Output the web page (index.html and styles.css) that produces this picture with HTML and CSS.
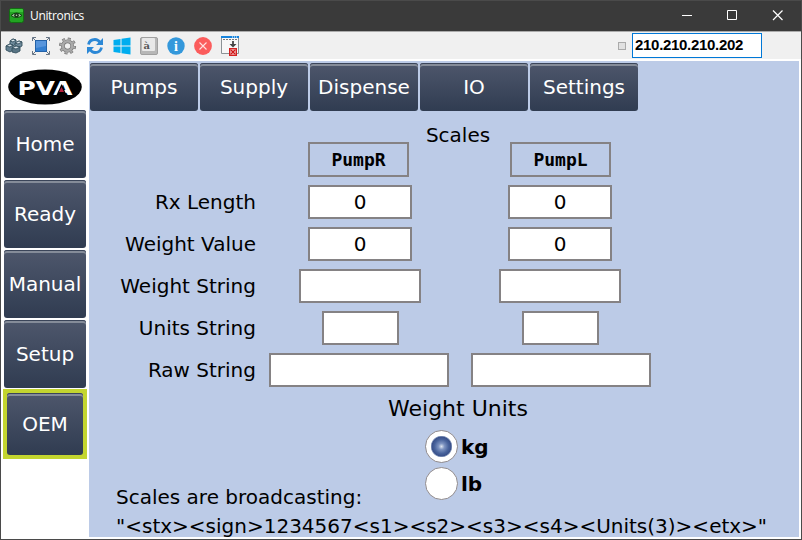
FILE: index.html
```html
<!DOCTYPE html>
<html lang="en">
<head>
<meta charset="utf-8">
<title>Unitronics</title>
<link rel="stylesheet" href="styles.css">
</head>
<body>
<div class="window">
  <header class="titlebar">
    <svg class="app-icon" width="15" height="15" viewBox="0 0 15 15"><rect x=".5" y=".5" width="14" height="14" rx="2" fill="#22a322" stroke="#126e12"/><path d="M1 4V2q0-1 1-1h11q1 0 1 1v2z" fill="#3cc43a"/><path d="M2 7.5Q7.500 2.500 13 7.500 7.500 11.500 2 7.500z" fill="#a9c9a5" stroke="#114411"/><circle cx="7.500" cy="7.300" r="2.300" fill="#173517"/><circle cx="7.500" cy="7.300" r=".8" fill="#bad9b5"/></svg>
    <span class="title">Unitronics</span>
    <svg class="controls" width="96" height="13" viewBox="0 0 96 13" fill="none" stroke="#fff"><path d="M0 6.500h10M45.500 1.500h9v9h-9z"/><path d="M91 1.500l9.500 9.500M100.500 1.500L91 11" stroke-width="1.200"/></svg>
  </header>
  <div class="toolbar">
    <div class="tools">
      <svg width="18" height="20" viewBox="0 0 18 20" stroke="#34505f" stroke-width=".9" stroke-linejoin="round"><path d="M5 5l3-2 3 1v4l-3 2-3-1z" fill="#6f8b9c"/><path d="M5 5l3-2 3 1-3 2z" fill="#dce6ec"/><path d="M10 7l4-2 3 1v4l-4 2-3-1z" fill="#6f8b9c"/><path d="M10 7l4-2 3 1-4 2z" fill="#dce6ec"/><path d="M1 10l4-2 3 1v5l-3 2-4-2z" fill="#637f90"/><path d="M1 10l4-2 3 1-3 2z" fill="#dce6ec"/><path d="M7 12l4-2 4 1v4l-4 2-4-1z" fill="#587484"/><path d="M7 12l4-2 4 1-4 2z" fill="#dce6ec"/></svg>
      <svg width="18" height="20" viewBox="0 0 18 20"><rect x="3.500" y="4.500" width="11" height="11" fill="#347fd0" stroke="#2362a8"/><path d="M4 5h10v5L4 12z" fill="#5795dc"/><path d="M.5 5V1.500H4M14 1.500h3.500V5M17.500 15v3.500H14M4 18.500H.5V15M1 2l2 2M17 2l-2 2M1 18l2-2M17 18l-2-2" fill="none" stroke="#44566a" stroke-width=".8"/></svg>
      <svg width="20" height="20" viewBox="0 0 20 20"><circle cx="9.500" cy="10" r="5.200" fill="none" stroke="#777" stroke-width="4.200"/><circle cx="9.500" cy="10" r="8" fill="none" stroke="#777" stroke-width="3" stroke-dasharray="3.200 3.083"/><circle cx="9.500" cy="10" r="5.200" fill="none" stroke="#aaa" stroke-width="2.800"/><circle cx="9.500" cy="10" r="7.500" fill="none" stroke="#aaa" stroke-width="2.400" stroke-dasharray="2 3.890" stroke-dashoffset="-.5"/></svg>
      <svg width="18" height="20" viewBox="0 0 18 20" fill="none" stroke="#2c88d6" stroke-width="2.800"><path d="M2.500 8.500Q3.500 3.500 9 3.500q3 0 5 3M15.500 11.500q-1 5-6.500 5-3 0-5-3"/><path d="M10 9h7V2zM8 11H1v7z" fill="#2c88d6" stroke="none"/></svg>
      <svg width="17" height="20" viewBox="0 0 17 20" fill="#00adef"><path d="M0 4l7-1v6.500H0zM8 2.800L17 1.500v8H8zM0 10.500h7V17l-7-1zM8 10.500h9v8l-9-1.300z"/></svg>
      <svg class="key-icon" width="18" height="20" viewBox="0 0 18 20"><rect x=".5" y="1.500" width="17" height="17" rx="1.500" fill="#b7b7b7" stroke="#a0a0a0"/><rect x="2" y="2" width="13" height="13" rx="1" fill="#e8e8e8"/><text x="3.500" y="13">à</text></svg>
      <svg class="info-icon" width="18" height="20" viewBox="0 0 18 20"><circle cx="9" cy="10" r="8.700" fill="#3498db"/><text x="9" y="15" text-anchor="middle">i</text></svg>
      <svg width="18" height="20" viewBox="0 0 18 20"><circle cx="9" cy="10" r="8.900" fill="#fb5c5c"/><path d="M5.500 6.500l7 7M12.500 6.500l-7 7" stroke="#ffe1e1" stroke-width="1.100"/></svg>
      <svg width="18" height="20" viewBox="0 0 18 20"><path d="M.5.5h17v17H.5z" fill="#f7f7f7" stroke="#8c9296"/><path d="M0 0h18v2H0z" fill="#1683dc"/><path d="M11 1h1m1 0h1m1 0h1" stroke="#fff"/><path d="M2 3.500h14" stroke="#777" stroke-dasharray="2 1"/><path d="M12 5v5" stroke="#444" stroke-width="1.800"/><path d="M8.500 8h7L12 11.500z" fill="#444"/><path d="M8.750 12.750h6.500v6.500h-6.500z" fill="#fff" stroke="#d32121" stroke-width="1.500"/><path d="M10 14l4 4M14 14l-4 4" stroke="#d01818" stroke-width="1.600"/></svg>
    </div>
    <span class="indicator"></span>
    <div class="address">210.210.210.202</div>
  </div>
  <div class="body">
    <nav class="sidebar">
      <svg class="logo" width="74" height="36" viewBox="0 0 74 36"><ellipse cx="37" cy="18" rx="36.800" ry="17.500"/><text x="9.500" y="25.500" textLength="55" lengthAdjust="spacingAndGlyphs">PVA</text><path d="M53.500 15l5 11h-10z"/><path d="M53.500 18l2.500 5h-5z" fill="#b51f3c"/></svg>
      <div class="btn side">Home</div>
      <div class="btn side">Ready</div>
      <div class="btn side">Manual</div>
      <div class="btn side">Setup</div>
      <div class="selected"><div class="btn">OEM</div></div>
    </nav>
    <main class="panel">
      <div class="tabs">
        <div class="btn">Pumps</div><div class="btn">Supply</div><div class="btn">Dispense</div><div class="btn">IO</div><div class="btn">Settings</div>
      </div>
      <div class="heading">Scales</div>
      <div class="row head"><span></span><div class="cell"><div class="field name">PumpR</div></div><div class="cell"><div class="field name">PumpL</div></div></div>
      <div class="row"><span>Rx Length</span><div class="cell"><div class="field num">0</div></div><div class="cell"><div class="field num">0</div></div></div>
      <div class="row"><span>Weight Value</span><div class="cell"><div class="field num">0</div></div><div class="cell"><div class="field num">0</div></div></div>
      <div class="row"><span>Weight String</span><div class="cell"><div class="field weight"></div></div><div class="cell"><div class="field weight"></div></div></div>
      <div class="row units"><span>Units String</span><div class="cell"><div class="field unit"></div></div><div class="cell"><div class="field unit"></div></div></div>
      <div class="row raw"><span>Raw String</span><div class="cell"><div class="field long"></div></div><div class="cell"><div class="field long"></div></div></div>
      <div class="unit-heading">Weight Units</div>
      <div class="radio"><i class="on"></i><b>kg</b></div>
      <div class="radio"><i></i><b>lb</b></div>
      <div class="note">Scales are broadcasting:</div>
      <div class="format">"&lt;stx&gt;&lt;sign&gt;1234567&lt;s1&gt;&lt;s2&gt;&lt;s3&gt;&lt;s4&gt;&lt;Units(3)&gt;&lt;etx&gt;"</div>
    </main>
  </div>
</div>
</body>
</html>
```
FILE: styles.css
```css
* { box-sizing: border-box; }
body { margin: 0; overflow: hidden; }
.window {
  width: 802px; height: 540px; border: 1px solid #4a4a4a; background: #fff;
  display: flex; flex-direction: column;
  font: 20px/24px "DejaVu Sans", sans-serif; color: #000;
}
.titlebar { height: 30px; background: #3a3a3a; display: flex; align-items: center; padding: 0 18px 0 8px; flex: none; }
.app-icon { margin-bottom: 2px; }
.title { font: 12px/16px "Open Sans", sans-serif; color: #fff; margin-left: 6px; letter-spacing: -.35px; flex: 1; }
.controls { overflow: visible; margin: 0 5px 1px 0; }
.toolbar { height: 30px; flex: none; background: #f0f0f0; border-top: 1px solid #ababab; border-bottom: 2px solid #fff; display: flex; align-items: flex-start; padding-left: 4px; }
.tools { display: flex; gap: 9px; padding-top: 4px; width: 613px; }
.tools svg { width: 18px; flex: none; overflow: visible; }
.key-icon text { font: bold 10px "DejaVu Serif", serif; fill: #555; }
.info-icon text { font: bold 14px "Liberation Serif", serif; fill: #fff; }
.indicator { width: 8px; height: 8px; border: 1px solid #aaa; background: #e1e1e1; margin-top: 10px; }
.address { width: 130px; height: 25px; margin: 1px 0 0 6px; border: 1px solid #0078d7; background: #fff; padding-left: 2px; font: bold 15px/21px "Liberation Sans", sans-serif; letter-spacing: -.3px; }
.body { display: flex; height: 476px; }
.sidebar { width: 88px; padding: 7px 2px 0 3px; display: flex; flex-direction: column; }
.logo { margin: 1px 0 5px 4px; flex: none; }
.logo text { font: bold 20px "DejaVu Sans", sans-serif; fill: #fff; }
.btn {
  display: flex; align-items: center; justify-content: center; color: #fff;
  background: linear-gradient(#4e576c, #303c51); border-radius: 3px;
  box-shadow: inset 0 1px #3b4559, inset 0 3px #858c99;
}
.side { height: 68px; width: 82px; margin-bottom: 2px; flex: none; }
.selected { width: 84px; height: 70px; margin: -1px 0 0 -1px; padding: 4px; background: #c3d52f; flex: none; }
.selected .btn { height: 62px; }
.panel { width: 710px; height: 476px; background: #bccbe7; display: flex; flex-direction: column; }
.tabs { display: flex; gap: 2px; padding: 2px 0 0 1px; }
.tabs .btn { width: 108px; height: 48px; }
.heading { height: 24px; margin: 12px 0 -5px; width: 738px; text-align: center; flex: none; }
.row { display: grid; grid-template-columns: 171px 200px 200px; height: 34px; margin-bottom: 8px; flex: none; align-items: center; }
.row > span { text-align: right; padding-right: 4px; }
.cell { display: flex; justify-content: center; }
.field { height: 34px; border: 2px solid #858284; background: #fff; display: flex; align-items: center; justify-content: center; flex: none; }
.head { height: 35px; }
.head .cell:nth-child(2) { padding-right: 3px; }
.head .cell:nth-child(3) { padding-left: 1px; }
.name { width: 101px; height: 35px; background: none; font: bold 18px/24px "DejaVu Sans Mono", monospace; }
.num { width: 104px; }
.weight { width: 122px; }
.unit { width: 77px; }
.units .cell { padding-left: 1px; }
.long { width: 180px; }
.raw .cell:nth-child(2) { padding-right: 2px; }
.raw .cell:nth-child(3) { padding-left: 2px; }
.unit-heading { font-size: 22px; width: 738px; height: 28px; line-height: 28px; text-align: center; flex: none; }
.radio { display: flex; align-items: center; gap: 3px; height: 33px; margin: 7px 0 -3px 336px; flex: none; }
.radio i { width: 33px; height: 33px; border: 1px solid #918b8d; border-radius: 50%; background: #fff; }
.radio .on { background: radial-gradient(circle, #dbe3ef 0, #7e94c1 3px, #48639c 7px, #3a518b 9.5px, #9cacca 10.5px, #fff 11px); }
.note { margin: -12px 0 0 27px; height: 24px; flex: none; }
.format { margin: 5px 0 0 27px; white-space: nowrap; }
```
